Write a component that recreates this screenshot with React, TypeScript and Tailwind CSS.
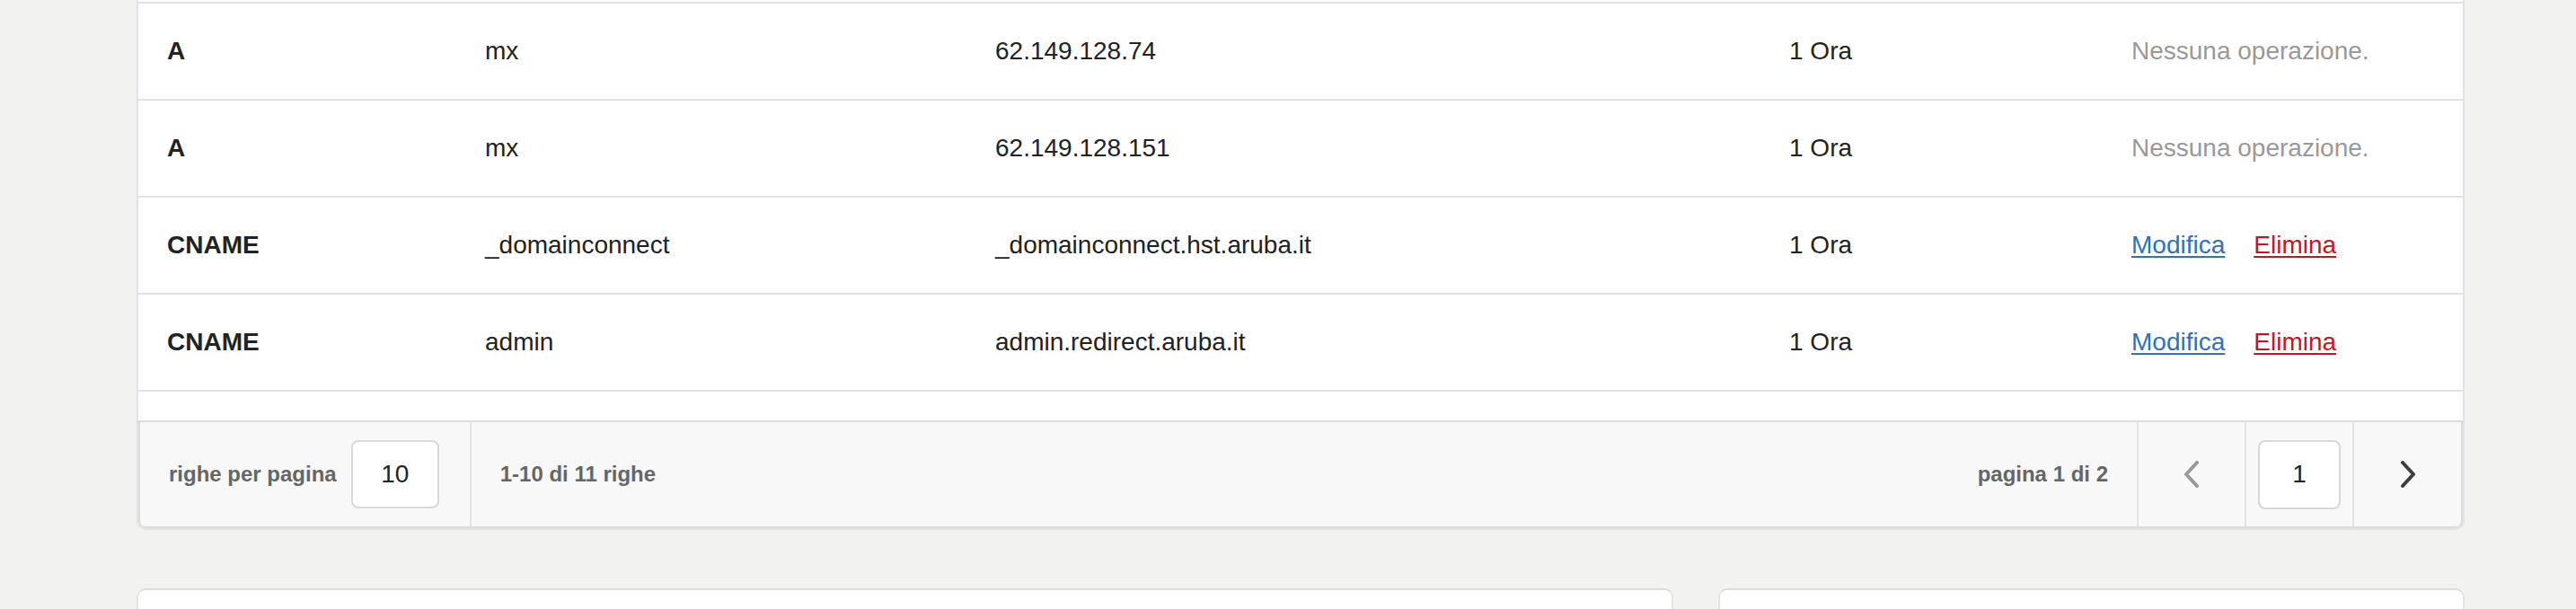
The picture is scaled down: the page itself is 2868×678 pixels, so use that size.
import React from 'react';

type DnsRecord = {
  type: string;
  name: string;
  value: string;
  ttl: string;
  editable: boolean;
};

const records: DnsRecord[] = [
  { type: 'A', name: 'mx', value: '62.149.128.74', ttl: '1 Ora', editable: false },
  { type: 'A', name: 'mx', value: '62.149.128.151', ttl: '1 Ora', editable: false },
  { type: 'CNAME', name: '_domainconnect', value: '_domainconnect.hst.aruba.it', ttl: '1 Ora', editable: true },
  { type: 'CNAME', name: 'admin', value: 'admin.redirect.aruba.it', ttl: '1 Ora', editable: true },
];

const ChevronLeft = ({ color }: { color: string }) => (
  <svg width="18" height="30" viewBox="0 0 18 30" fill="none">
    <polyline points="15,2 3,15 15,28" stroke={color} strokeWidth="4" strokeLinecap="round" strokeLinejoin="round" />
  </svg>
);

const ChevronRight = ({ color }: { color: string }) => (
  <svg width="18" height="30" viewBox="0 0 18 30" fill="none">
    <polyline points="3,2 15,15 3,28" stroke={color} strokeWidth="4" strokeLinecap="round" strokeLinejoin="round" />
  </svg>
);

const RecordRow = ({ record }: { record: DnsRecord }) => (
  <div className="grid grid-cols-[354px_568px_884px_381px_1fr] h-[108px] border-t-2 border-[#dfe2e6] text-[28px] text-[#222]">
    <div className="flex items-center pl-8 font-bold">{record.type}</div>
    <div className="flex items-center pl-8">{record.name}</div>
    <div className="flex items-center pl-8">{record.value}</div>
    <div className="flex items-center pl-8">{record.ttl}</div>
    <div className="flex items-center pl-8 gap-8">
      {record.editable ? (
        <>
          <a className="text-[#3071b9] underline decoration-2 underline-offset-[3px] cursor-pointer">Modifica</a>
          <a className="text-[#c5161d] underline decoration-2 underline-offset-[3px] cursor-pointer">Elimina</a>
        </>
      ) : (
        <span className="text-[#999]">Nessuna operazione.</span>
      )}
    </div>
  </div>
);

const App = () => {
  return (
    <div className="h-[678px] overflow-hidden bg-[#f2f2f0] pl-[152px] pr-[124px] [font-family:'Liberation_Sans',Arial,sans-serif]">
      {/* DNS records card */}
      <div className="w-[2592px] bg-white border-x-2 border-b-2 border-[#e2e2e2] rounded-b-[10px]">
        <div className="h-[2px]" />
        {records.map((r, i) => (
          <RecordRow key={i} record={r} />
        ))}
        <div className="h-[34px] border-t-2 border-[#dfe2e6]" />

        {/* Pagination footer */}
        <div className="flex h-[120px] bg-[#f8f8f8] border-2 border-[#dcdcdc] rounded-b-[8px] text-[24px] font-bold text-[#666]">
          <div className="flex items-center pl-8 pr-[34px] gap-[16px] border-r-2 border-[#e3e3e3]">
            <span>righe per pagina</span>
            <div className="w-[98px] h-[76px] flex items-center justify-center bg-white border-2 border-[#d5d9dd] rounded-[8px] text-[28px] font-normal text-[#222]">
              10
            </div>
          </div>
          <div className="flex-1 flex items-center pl-8">1-10 di 11 righe</div>
          <div className="flex items-center pr-8 border-r-2 border-[#e3e3e3]">pagina 1 di 2</div>
          <div className="w-[120px] flex items-center justify-center border-r-2 border-[#e3e3e3]">
            <ChevronLeft color="#9a9a9a" />
          </div>
          <div className="w-[120px] flex items-center justify-center border-r-2 border-[#e3e3e3]">
            <div className="w-[92px] h-[77px] flex items-center justify-center bg-white border-2 border-[#d5d9dd] rounded-[8px] text-[28px] font-normal text-[#222]">
              1
            </div>
          </div>
          <div className="flex-1 max-w-[119px] flex items-center justify-center">
            <ChevronRight color="#3d3d3d" />
          </div>
        </div>
      </div>

      {/* Lower cards */}
      <div className="grid grid-cols-[1711px_831px] gap-[50px] mt-[65px] w-[2592px]">
        <div className="h-[240px] bg-white border-2 border-t-[#dcdcdc] border-[#e4e4e4] rounded-[10px]" />
        <div className="h-[240px] bg-white border-2 border-t-[#dcdcdc] border-[#e4e4e4] rounded-[10px]" />
      </div>
    </div>
  );
};

export default App;
